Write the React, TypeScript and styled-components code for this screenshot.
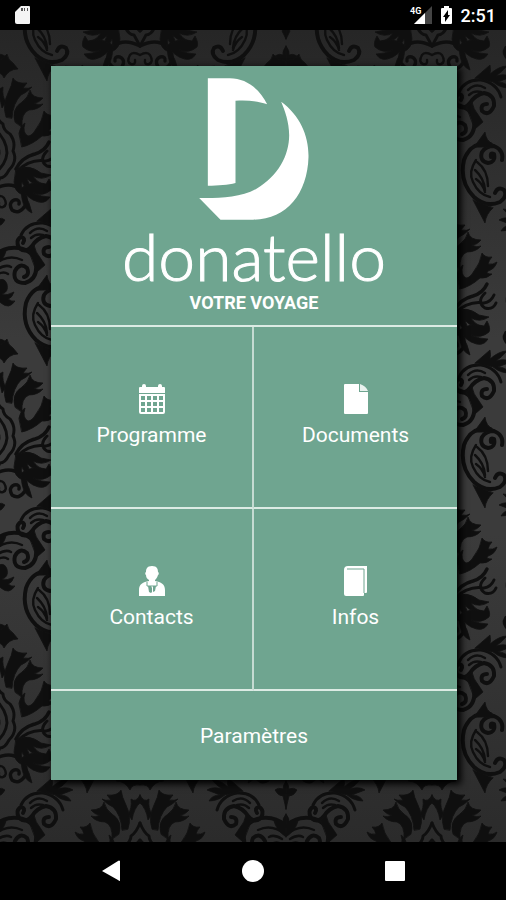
import React from "react";
import styled, { createGlobalStyle } from "styled-components";

const GREEN = "#6fa590";
const LINE = "#dcebe4";
const INK = "#0f0f0f";

const GlobalStyle = createGlobalStyle`
  *, *::before, *::after { box-sizing: border-box; }
  body {
    margin: 0;
    background: #000;
    color: #fff;
    font-family: Roboto, "Liberation Sans", sans-serif;
  }
  button { font: inherit; color: inherit; cursor: pointer; }
  svg { display: block; }
`;

const Screen = styled.div`
  display: flex;
  flex-direction: column;
  min-height: 100vh;
`;

const StatusBar = styled.header`
  display: flex;
  align-items: center;
  justify-content: space-between;
  height: 30px;
  padding: 0 10px 0 14px;
  background: #000;
`;

const StatusGroup = styled.div`
  display: flex;
  align-items: center;
  gap: 8px;
`;

const Clock = styled.time`
  font-size: 18px;
  line-height: 20px;
  font-weight: 500;
  padding-top: 2px;
`;

const Stage = styled.main`
  position: relative;
  isolation: isolate;
  flex: 1;
  display: flex;
  padding: 36px 49px 62px 51px;
  overflow: hidden;
  background: linear-gradient(#262626, #3b3b3b 38%, #3b3b3b 62%, #2b2b2b);
`;

const Wallpaper = styled.svg`
  position: absolute;
  inset: 0;
  z-index: -1;
  width: 100%;
  height: 100%;
`;

const Card = styled.section`
  flex: 1;
  min-width: 0;
  display: flex;
  flex-direction: column;
  background: ${GREEN};
  box-shadow: 3px 3px 7px 1px #000;
`;

const Brand = styled.div`
  display: flex;
  flex-direction: column;
  align-items: center;
  height: 261px;
  padding-top: 12px;
  border-bottom: 2px solid ${LINE};
`;

const Wordmark = styled.h1`
  margin: 0;
  font-family: Lato, "Open Sans", sans-serif;
  font-size: 66px;
  line-height: 72px;
  font-weight: 300;
  -webkit-text-stroke: 1px #fff;
`;

const Tagline = styled.p`
  margin: 0;
  font-size: 18px;
  line-height: 22px;
  font-weight: 700;
`;

const Tiles = styled.nav`
  flex: 1;
  display: grid;
  grid-template-columns: 1fr 1fr;
  grid-auto-rows: 1fr;
`;

const Tile = styled.button<{ $divided?: boolean }>`
  display: flex;
  flex-direction: column;
  align-items: center;
  justify-content: center;
  gap: 6px;
  padding: 0;
  border: 0;
  border-bottom: 2px solid ${LINE};
  border-right: ${(p) => (p.$divided ? `2px solid #c5dbd2` : "0")};
  background: none;
`;

const Label = styled.span`
  font-size: 21px;
  line-height: 30px;
`;

const Settings = styled.button`
  height: 89px;
  padding: 0;
  border: 0;
  background: none;
`;

const SystemNav = styled.nav`
  display: flex;
  justify-content: center;
  gap: 94px;
  height: 58px;
  background: #000;
`;

const SystemButton = styled.button`
  display: flex;
  align-items: center;
  justify-content: center;
  width: 48px;
  padding: 0;
  border: 0;
  background: none;
`;

/* Right half of one damask ornament; x = 0 is its axis of symmetry. */
function DamaskHalf() {
  return (
    <g fill={INK} stroke={INK} strokeLinecap="round" strokeLinejoin="round" strokeWidth="0.8">
      {/* florets on the axis */}
      <path d="M0-129 l4 7 -4 8z M0-107 q4 5 3 9 q4-2 8 1 q-3 5-8 5 l-3 6z" />
      <path d="M0 58 q3 4 3 8 q5-2 8 1 q-3 6-8 6 l-3 13z M0 91 q4 4 3 10 q5-5 9-3 q-2 9-12 16z" />
      {/* crown */}
      <path d="M0-92 q8-1 13-7 q1 6 6 9 l5 6 q-9 0-14 9 q-2-6-10-5z" />
      <path d="M0-70 q4 8 9 4 q-1 10 3 15 l-4 6 q-2-12-8-17z" />
      <path d="M12-36 q-4-12 2-24 q4-8 5-15 q3 6 14 5 l-4 5 q6 1 9-1 q-6 6-11 8 q-8 8-9 23z" />
      <path d="M21-31 q-4-13 7-20 q6-4 8-12 q2 8 13 8 q-4 5-9 5 q5 3 9 1 q-5 6-14 6 q-8 3-7 17z" />
      <path d="M25-20 q2-8 6-10 q-3 10 3 13 q4 0 8-7 q6-7 8-18 q3 5 10 4 q-3 3-4 7 q5 1 9-2 q-2 7-9 9 q-3 3 4 3 q-5 5-12 4 q-10 9-20 11z" />
      {/* medallion */}
      <path fill="none" strokeWidth="3" d="M0-42 q4 10 9 13 q0 6 7 10 q6 8 3 17 q5 10-4 19 q-4 8-9 8 l-6 11" />
      <path fill="none" strokeWidth="3" d="M0-25 q13 12 13 25 q-1 12-13 21" />
      <path d="M0-13 q7 7 6 14 q-1 6-6 8z" />
      {/* foliage beside the medallion */}
      <path fill="none" strokeWidth="3.5" d="M22 16 q6-12 19-15 q10-3 14-12" />
      <path fill="none" strokeWidth="3" d="M23 18 q14-13 29-10 q7-1 10-8 M53-2 q-9 9 0 15 q8 2 11-5" />
      <path d="M22 17 q12-7 25 3 l10 2 q-9 6-18 1 q3 5 9 8 q-9 2-15-6 q1 6 6 12 q-8 0-11-8 q-2 7 1 13 q-9-3-9-13z" />
      {/* lower volute and fan */}
      <path fill="none" strokeWidth="3.5" d="M0 36 q16-8 26 0 q9 8 5 17 q-6 9-13 4 q-4-7 2-10 q6-1 5 4" />
      <path d="M27 35 q12-8 25-4 l3-5 q4 7 2 11 q-8 7-18 3 q9 4 17 4 q-5 9-17 3 q-5-3-9-7 q6 10 8 20 q-8-3-10-14z" />
      <path fill="none" strokeWidth="2.5" d="M0 45 q7-4 10 0 q4 7-1 9 q-5 1-4-4" />
      {/* comma scroll */}
      <path fill="none" strokeWidth="4" d="M29 90 q3-5-2-6 q-6 3-2 11 q7 6 13-2 q5-8 14-10 q11 2 10 13 q-5 11-12 5 q-2-7 5-7" />
      <path fill="none" strokeWidth="3" d="M27 82 q6-13 22-12 q16 3 20 17" />
      <path d="M43 68 l15-13 q1 5 0 9 q9-8 17-8 q-5 6-11 10 q9-3 15 1 q-8 3-13 5 q8 0 11 6 q-9 0-16-6z" />
      <path fill="none" strokeWidth="2.5" d="M36 80 q8-8 17-2 M37 85 q5-5 12-3" />
      {/* heart scroll */}
      <path fill="none" strokeWidth="4" d="M0 103 q10-10 25-8 q15 3 17 15 q2 16-11 20 q-13 0-10-12 q5-9 12-3 q3 7-3 9" />
      <path fill="none" strokeWidth="2.5" d="M0 112 q14-12 28-5 M4 116 q8-5 13-2 M4 121 q6-3 10 0" />
      <path d="M35 98 l5-6 q2 8 5 11 l6 9 -8 7z" />
      <path d="M0 130 q10-8 13 1 q2 8-5 10 q5 2 12-2 q-2 6-6 7 q4 3 7 2 q-6 9-14 2 q-3-3-7-4z" />
      {/* C-shaped leaf */}
      <path fill="none" strokeWidth="4" d="M59 147 q-1-5 3-3 q2 8-6 9 q-9-2-6-11 q4-6 12-6 q10 4 8 14" />
      <path fill="none" strokeWidth="4" d="M58 134 q-19-3-26 16 q-5 22 10 37 q12 11 26 5 q8-6 4-12 q-6-4-9 3" />
      <path d="M42 137 l11-15 q1 9 8 12 l6 4 -12-1z M41 190 l12 23 q1-9 8-15z" />
      <path fill="none" strokeWidth="2.5" d="M44 150 q-8 12-3 22 q6 13 17 15 M43 160 q9 8 10 20 M44 169 q7 5 9 13 M45 152 q11 8 11 24" />
    </g>
  );
}

function Ornament({ x, y }: { x: number; y: number }) {
  return (
    <g transform={`translate(${x} ${y})`}>
      <DamaskHalf />
      <g transform="scale(-1 1)">
        <DamaskHalf />
      </g>
    </g>
  );
}

function Damask() {
  return (
    <Wallpaper aria-hidden="true">
      <defs>
        <pattern id="damask" width="292" height="285" x="-6" y="123" patternUnits="userSpaceOnUse">
          {[-285, 0, 285].map((y) => (
            <React.Fragment key={y}>
              <Ornament x={0} y={y} />
              <Ornament x={292} y={y} />
              <Ornament x={146} y={y + 142} />
            </React.Fragment>
          ))}
        </pattern>
      </defs>
      <rect width="100%" height="100%" fill="url(#damask)" />
    </Wallpaper>
  );
}

const CalendarIcon = () => (
  <svg width="28" height="30" viewBox="0 0 28 30" fill="#fff" aria-hidden="true">
    <path
      fillRule="evenodd"
      d="M1 4q0-1 1-1h2V2a2 2 0 0 1 4 0v1h12V2a2 2 0 0 1 4 0v1h2q1 0 1 1v5H1z M1 10h26v18a2 2 0 0 1-2 2H3a2 2 0 0 1-2-2z
      M3 12v4h4v-4z M9 12v4h4v-4z M15 12v4h4v-4z M21 12v4h4v-4z
      M3 18v4h4v-4z M9 18v4h4v-4z M15 18v4h4v-4z M21 18v4h4v-4z
      M3 24v4h4v-4z M9 24v4h4v-4z M15 24v4h4v-4z M21 24v4h4v-4z"
    />
  </svg>
);

const DocumentIcon = () => (
  <svg width="26" height="30" viewBox="0 0 26 30" fill="#fff" aria-hidden="true">
    <path d="M1 1q0-1 1-1h14v8h9v21q0 1-1 1H2q-1 0-1-1z" />
    <path d="M17 0q6 2 8 7h-8z" opacity="0.85" />
  </svg>
);

const PersonIcon = () => (
  <svg width="28" height="30" viewBox="0 0 28 30" aria-hidden="true">
    <path
      fill="#fff"
      d="M14 0c5 0 6 3 6 6 1 0 1 3 0 3-1 3-2 4-3 5v1c6 1 10 3 10 9v6H1v-6c0-6 4-8 10-9v-1c-2-1-3-3-3-5-1 0-1-3 0-3 0-3 1-6 6-6z"
    />
    <path fill="none" stroke={GREEN} strokeWidth="1" d="M9 16v4h10v-4" />
    <path fill={GREEN} d="M10 20h3l1 2v4l-1 1-2-1z M18 20h-3v6l2-1z" />
  </svg>
);

const BookIcon = () => (
  <svg width="24" height="30" viewBox="0 0 24 30" aria-hidden="true">
    <path fill="#fff" d="M4 0h19v26q0 1-1 1h-2v2q0 1-1 1H2q-2 0-2-2V4q0-4 4-4z" />
    <path fill="none" stroke={GREEN} strokeWidth="1" d="M3 3h17v24" />
  </svg>
);

const LogoMark = () => (
  <svg width="110" height="142" viewBox="28 38 329 426" fill="#fff" aria-hidden="true">
    <path d="M54 39H120C170 39 210 72 232 117C200 105 170 105 137 106V353C115 359 85 361 54 361Z" />
    <path d="M274 109C330 150 357 210 356 275C353 385 290 463 190 463H92L28 398C80 399 150 398 200 370C265 333 298 270 298 210C298 170 285 135 274 109Z" />
  </svg>
);

const SdCardIcon = () => (
  <svg width="17" height="20" viewBox="0 0 17 20" role="img" aria-label="Carte SD">
    <path fill="#f4f4f4" d="M7 1h8q1 0 1 1v16q0 1-1 1H3q-2 0-2-2V7z" />
    <path fill="#555" d="M7 3h2v3H7z M10 3h1v3h-1z M13 3h1v3h-1z" />
  </svg>
);

const SignalIcon = () => (
  <svg width="23" height="20" viewBox="0 0 23 20" role="img" aria-label="Réseau 4G">
    <path fill="#444" d="M23 1v18H5z" />
    <path fill="#000" d="M0 0h13v10H0z" />
    <path fill="#fff" d="M16 8v11H5z" />
    <text x="1" y="9" fill="#fff" fontSize="9" fontWeight="700">4G</text>
  </svg>
);

const BatteryIcon = () => (
  <svg width="13" height="20" viewBox="0 0 13 20" role="img" aria-label="Batterie en charge">
    <path fill="#fff" d="M4 1h5v2h2q1 0 1 1v14q0 1-1 1H2q-1 0-1-1V4q0-1 1-1h2z" />
    <path fill="#000" d="M8 5v5h2l-5 7v-5H3z" />
  </svg>
);

const tiles = [
  { label: "Programme", Icon: CalendarIcon },
  { label: "Documents", Icon: DocumentIcon },
  { label: "Contacts", Icon: PersonIcon },
  { label: "Infos", Icon: BookIcon },
];

export default function App() {
  return (
    <Screen>
      <GlobalStyle />
      <StatusBar>
        <SdCardIcon />
        <StatusGroup>
          <SignalIcon />
          <BatteryIcon />
          <Clock>2:51</Clock>
        </StatusGroup>
      </StatusBar>
      <Stage>
        <Damask />
        <Card>
          <Brand>
            <LogoMark />
            <Wordmark>donatello</Wordmark>
            <Tagline>VOTRE VOYAGE</Tagline>
          </Brand>
          <Tiles>
            {tiles.map(({ label, Icon }, i) => (
              <Tile key={label} type="button" $divided={i % 2 === 0}>
                <Icon />
                <Label>{label}</Label>
              </Tile>
            ))}
          </Tiles>
          <Settings type="button">
            <Label>Paramètres</Label>
          </Settings>
        </Card>
      </Stage>
      <SystemNav>
        <SystemButton type="button" aria-label="Retour">
          <svg width="18" height="22" viewBox="0 0 18 22" fill="#fff">
            <path d="M18 1v20q-1 0-2-1L0 11 16 1q1-1 2 0z" />
          </svg>
        </SystemButton>
        <SystemButton type="button" aria-label="Accueil">
          <svg width="22" height="22" viewBox="0 0 22 22" fill="#fff">
            <circle cx="11" cy="11" r="11" />
          </svg>
        </SystemButton>
        <SystemButton type="button" aria-label="Applications récentes">
          <svg width="20" height="20" viewBox="0 0 20 20" fill="#fff">
            <rect width="20" height="20" rx="1" />
          </svg>
        </SystemButton>
      </SystemNav>
    </Screen>
  );
}
